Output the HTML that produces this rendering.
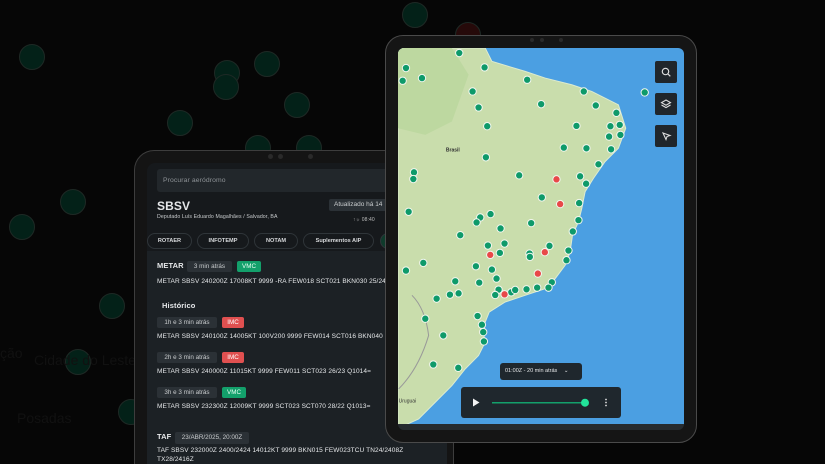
<!DOCTYPE html>
<html><head><meta charset="utf-8"><style>
*{margin:0;padding:0;box-sizing:border-box}
html,body{width:825px;height:464px;overflow:hidden;background:#060606}
body{font-family:"Liberation Sans",sans-serif}
#w{position:relative;width:825px;height:464px;overflow:hidden;background:#060606}
.a{position:absolute}
.bd{position:absolute;border-radius:50%;background:#032118;border:1.5px solid #1e2925;width:26px;height:26px}
.back{left:134px;top:150px;width:320px;height:314px;border-radius:20px 20px 0 0;background:#141414;border:1.5px solid #3d3d3d;border-bottom:none}
.scr{left:147px;top:163px;width:300px;height:301px;border-radius:8px 8px 0 0;background:#16191c;overflow:hidden}
.t{position:absolute;color:#e6e8ea;font-size:6.5px;line-height:8px;white-space:nowrap;letter-spacing:.1px}
.bg{position:absolute;background:#2b3136;color:#c9ccce;font-size:6.3px;border-radius:2px;height:11px;line-height:11px;text-align:center}
.pill{position:absolute;top:70px;height:16px;border:1px solid #2f3539;border-radius:8px;color:#d8dadc;font-size:5.6px;font-weight:bold;line-height:14px;text-align:center}
.btn{position:absolute;left:257px;width:22px;height:22px;background:#20262b;border-radius:2px}
</style></head><body><div id="w">
<div class="bd" style="left:19px;top:44px"></div>
<div class="bd" style="left:214px;top:60px"></div>
<div class="bd" style="left:254px;top:51px"></div>
<div class="bd" style="left:213px;top:74px"></div>
<div class="bd" style="left:284px;top:92px"></div>
<div class="bd" style="left:167px;top:110px"></div>
<div class="bd" style="left:60px;top:189px"></div>
<div class="bd" style="left:9px;top:214px"></div>
<div class="bd" style="left:99px;top:293px"></div>
<div class="bd" style="left:65px;top:349px"></div>
<div class="bd" style="left:118px;top:399px"></div>
<div class="bd" style="left:245px;top:135px"></div>
<div class="bd" style="left:296px;top:135px"></div>
<div class="bd" style="left:402px;top:2px"></div>
<div class="bd" style="left:455px;top:22px;background:#260a0a"></div>
<div class="a" style="left:0;top:345px;color:#111;font-size:14px">ção</div>
<div class="a" style="left:34px;top:352px;color:#111;font-size:14px">Cidade do Leste</div>
<div class="a" style="left:17px;top:410px;color:#111;font-size:14px">Posadas</div>

<div class="a back"></div>
<div class="a" style="left:268px;top:154px;width:5px;height:5px;border-radius:50%;background:#2a2a2a"></div>
<div class="a" style="left:278px;top:154px;width:5px;height:5px;border-radius:50%;background:#2a2a2a"></div>
<div class="a" style="left:308px;top:154px;width:5px;height:5px;border-radius:50%;background:#2a2a2a"></div>
<div class="a scr">
 <div class="a" style="left:10px;top:6px;width:290px;height:23px;background:#22272b;border-radius:3px"></div>
 <div class="t" style="left:16px;top:14px;color:#8d9296;font-size:6.8px">Procurar aeródromo</div>
 <div class="t" style="left:10px;top:36px;font-size:12px;line-height:14px;font-weight:bold">SBSV</div>
 <div class="t" style="left:10px;top:50px;font-size:5.2px;color:#c8cbcd">Deputado Luís Eduardo Magalhães / Salvador, BA</div>
 <div class="bg" style="left:182px;top:36px;width:80px;height:12px;font-size:6.5px;text-align:left;padding-left:5px">Atualizado há 14</div>
 <div class="t" style="left:206px;top:53px;font-size:5px;color:#bbb">↑☼ 08:40</div>
 <div class="pill" style="left:0;width:45px">ROTAER</div>
 <div class="pill" style="left:50px;width:52px">INFOTEMP</div>
 <div class="pill" style="left:107px;width:44px">NOTAM</div>
 <div class="pill" style="left:156px;width:71px">Suplementos AIP</div>
 <div class="pill" style="left:233px;width:30px;background:#0e3b2b"></div>
 <div class="a" style="left:0;top:88px;width:300px;height:213px;background:#1c2125"></div>
 <div class="t" style="left:10px;top:99px;font-size:7.5px;font-weight:bold">METAR</div>
 <div class="bg" style="left:40px;top:98px;width:45px">3 min atrás</div>
 <div class="bg" style="left:90px;top:98px;width:24px;background:#13a06b;color:#e8fff4">VMC</div>
 <div class="t" style="left:10px;top:115px">METAR SBSV 240200Z 17008KT 9999 -RA FEW018 SCT021 BKN030 25/24 Q1013=</div>
 <div class="t" style="left:15px;top:139px;font-size:7.5px;font-weight:bold">Histórico</div>
 <div class="bg" style="left:10px;top:154px;width:60px">1h e 3 min atrás</div>
 <div class="bg" style="left:75px;top:154px;width:22px;background:#e05050;color:#fff">IMC</div>
 <div class="t" style="left:10px;top:170px">METAR SBSV 240100Z 14005KT 100V200 9999 FEW014 SCT016 BKN040 26/23</div>
 <div class="bg" style="left:10px;top:189px;width:60px">2h e 3 min atrás</div>
 <div class="bg" style="left:75px;top:189px;width:22px;background:#e05050;color:#fff">IMC</div>
 <div class="t" style="left:10px;top:205px">METAR SBSV 240000Z 11015KT 9999 FEW011 SCT023 26/23 Q1014=</div>
 <div class="bg" style="left:10px;top:224px;width:60px">3h e 3 min atrás</div>
 <div class="bg" style="left:75px;top:224px;width:24px;background:#13a06b;color:#e8fff4">VMC</div>
 <div class="t" style="left:10px;top:240px">METAR SBSV 232300Z 12009KT 9999 SCT023 SCT070 28/22 Q1013=</div>
 <div class="t" style="left:10px;top:270px;font-size:7.5px;font-weight:bold">TAF</div>
 <div class="bg" style="left:28px;top:269px;width:74px;height:12px">23/ABR/2025, 20:00Z</div>
 <div class="t" style="left:10px;top:284px">TAF SBSV 232000Z 2400/2424 14012KT 9999 BKN015 FEW023TCU TN24/2408Z</div>
 <div class="t" style="left:10px;top:293px">TX28/2416Z</div>
</div>

<div class="a" style="left:385px;top:35px;width:312px;height:408px;border-radius:18px;background:#151515;border:1.5px solid #4a4a4a"></div>
<div class="a" style="left:398px;top:48px;width:286px;height:382px;border-radius:6px;background:#1b1f22;overflow:hidden">
<svg width="286" height="377" viewBox="38 40 859 1128" preserveAspectRatio="none" style="position:absolute;left:0;top:0">
<rect x="38" y="40" width="859" height="1128" fill="#4b9fe2"/>
<path d="M38 40 L300 40 L320 80 L420 110 L480 130 L560 150 L620 170 L700 210 L722 280 L700 340 L660 380 L625 430 L600 470 L590 520 L580 560 L562 600 L555 650 L540 690 L510 730 L480 760 L420 780 L360 800 L312 830 L292 880 L300 920 L280 960 L240 1000 L200 1050 L150 1100 L100 1150 L60 1168 L38 1168Z" fill="#c9ddac" stroke="#dcebd0" stroke-width="3"/>
<path d="M38 40 L200 40 L250 120 L200 260 L120 300 L38 280Z" fill="#bdd8a0"/>
<path d="M80 780 Q120 820 130 900 Q100 1000 40 1060" fill="none" stroke="#999" stroke-width="3"/>
<text x="182" y="350" font-size="15" font-weight="bold" fill="#333" font-family="Liberation Sans">Brasil</text>
<text x="40" y="1100" font-size="15" fill="#333" font-family="Liberation Sans">Uruguai</text>
<g fill="#0e9a6a" stroke="#f2f6ef" stroke-width="3">
<circle cx="222" cy="55" r="11"/><circle cx="62" cy="100" r="11"/><circle cx="52" cy="138" r="11"/><circle cx="110" cy="130" r="11"/><circle cx="298" cy="98" r="11"/><circle cx="426" cy="135" r="11"/><circle cx="262" cy="170" r="11"/><circle cx="596" cy="170" r="11"/><circle cx="779" cy="173" r="11"/><circle cx="280" cy="218" r="11"/><circle cx="468" cy="208" r="11"/><circle cx="632" cy="212" r="11"/><circle cx="694" cy="234" r="11"/><circle cx="676" cy="274" r="11"/><circle cx="704" cy="270" r="11"/><circle cx="574" cy="273" r="11"/><circle cx="672" cy="305" r="11"/><circle cx="706" cy="300" r="11"/><circle cx="306" cy="274" r="11"/><circle cx="536" cy="338" r="11"/><circle cx="604" cy="340" r="11"/><circle cx="678" cy="343" r="11"/><circle cx="302" cy="367" r="11"/><circle cx="640" cy="388" r="11"/><circle cx="86" cy="412" r="11"/><circle cx="84" cy="432" r="11"/><circle cx="402" cy="421" r="11"/><circle cx="585" cy="424" r="11"/><circle cx="603" cy="446" r="11"/><circle cx="70" cy="530" r="11"/><circle cx="470" cy="487" r="11"/><circle cx="582" cy="504" r="11"/><circle cx="316" cy="537" r="11"/><circle cx="285" cy="547" r="11"/><circle cx="274" cy="562" r="11"/><circle cx="580" cy="555" r="11"/><circle cx="438" cy="564" r="11"/><circle cx="346" cy="580" r="11"/><circle cx="563" cy="589" r="11"/><circle cx="225" cy="600" r="11"/><circle cx="308" cy="631" r="11"/><circle cx="358" cy="625" r="11"/><circle cx="344" cy="653" r="11"/><circle cx="493" cy="632" r="11"/><circle cx="433" cy="655" r="11"/><circle cx="434" cy="665" r="11"/><circle cx="550" cy="646" r="11"/><circle cx="544" cy="675" r="11"/><circle cx="114" cy="683" r="11"/><circle cx="62" cy="706" r="11"/><circle cx="272" cy="693" r="11"/><circle cx="320" cy="703" r="11"/><circle cx="334" cy="730" r="11"/><circle cx="210" cy="738" r="11"/><circle cx="282" cy="742" r="11"/><circle cx="500" cy="741" r="11"/><circle cx="194" cy="778" r="11"/><circle cx="220" cy="774" r="11"/><circle cx="340" cy="763" r="11"/><circle cx="330" cy="779" r="11"/><circle cx="378" cy="771" r="11"/><circle cx="390" cy="764" r="11"/><circle cx="424" cy="762" r="11"/><circle cx="456" cy="757" r="11"/><circle cx="490" cy="757" r="11"/><circle cx="154" cy="790" r="11"/><circle cx="120" cy="850" r="11"/><circle cx="277" cy="842" r="11"/><circle cx="290" cy="868" r="11"/><circle cx="294" cy="890" r="11"/><circle cx="296" cy="918" r="11"/><circle cx="174" cy="900" r="11"/><circle cx="144" cy="987" r="11"/><circle cx="219" cy="997" r="11"/>
</g>
<g fill="#e84848" stroke="#f2f6ef" stroke-width="3">
<circle cx="514" cy="433" r="11"/><circle cx="525" cy="507" r="11"/><circle cx="315" cy="659" r="11"/><circle cx="479" cy="651" r="11"/><circle cx="458" cy="715" r="11"/><circle cx="358" cy="777" r="11"/>
</g>
</svg>
<div class="btn" style="top:13px"><svg width="22" height="22"><circle cx="10.5" cy="10.5" r="3.2" fill="none" stroke="#ddd" stroke-width="1.2"/><path d="M13 13l2.3 2.3" stroke="#ddd" stroke-width="1.2"/></svg></div>
<div class="btn" style="top:45px"><svg width="22" height="22"><path d="M11 7l4.5 2.6-4.5 2.6-4.5-2.6z" fill="none" stroke="#ddd" stroke-width="1.1"/><path d="M6.5 12l4.5 2.6 4.5-2.6" fill="none" stroke="#ddd" stroke-width="1.1"/></svg></div>
<div class="btn" style="top:77px"><svg width="22" height="22"><path d="M8 8l7 2.5-3 1-1 3z" fill="none" stroke="#ddd" stroke-width="1.1"/></svg></div>
<div class="a" style="left:102px;top:315px;width:82px;height:17px;background:#1f272d;border-radius:3px;color:#e4e6e8;font-size:5.5px;line-height:17px;padding-left:5px">01:00Z - 20 min atrás <span style="margin-left:5px">⌄</span></div>
<div class="a" style="left:63px;top:339px;width:160px;height:31px;background:#1f272d;border-radius:3px">
 <svg width="160" height="31" style="position:absolute;left:0;top:0"><path d="M12 11.5v8l6.5-4z" fill="#f2f2f2"/><rect x="31" y="15" width="93" height="1.5" fill="#13a06b"/><circle cx="124" cy="15.7" r="4" fill="#22e39a"/><circle cx="145" cy="12.5" r=".9" fill="#ddd"/><circle cx="145" cy="15.5" r=".9" fill="#ddd"/><circle cx="145" cy="18.5" r=".9" fill="#ddd"/></svg>
</div>
<div class="a" style="left:0;top:376px;width:286px;height:6px;background:#262b2f"></div>
</div>
<div class="a" style="left:530px;top:38px;width:4px;height:4px;border-radius:50%;background:#2a2a2a"></div>
<div class="a" style="left:540px;top:38px;width:4px;height:4px;border-radius:50%;background:#2a2a2a"></div>
<div class="a" style="left:559px;top:38px;width:4px;height:4px;border-radius:50%;background:#2a2a2a"></div>
</div></body></html>
